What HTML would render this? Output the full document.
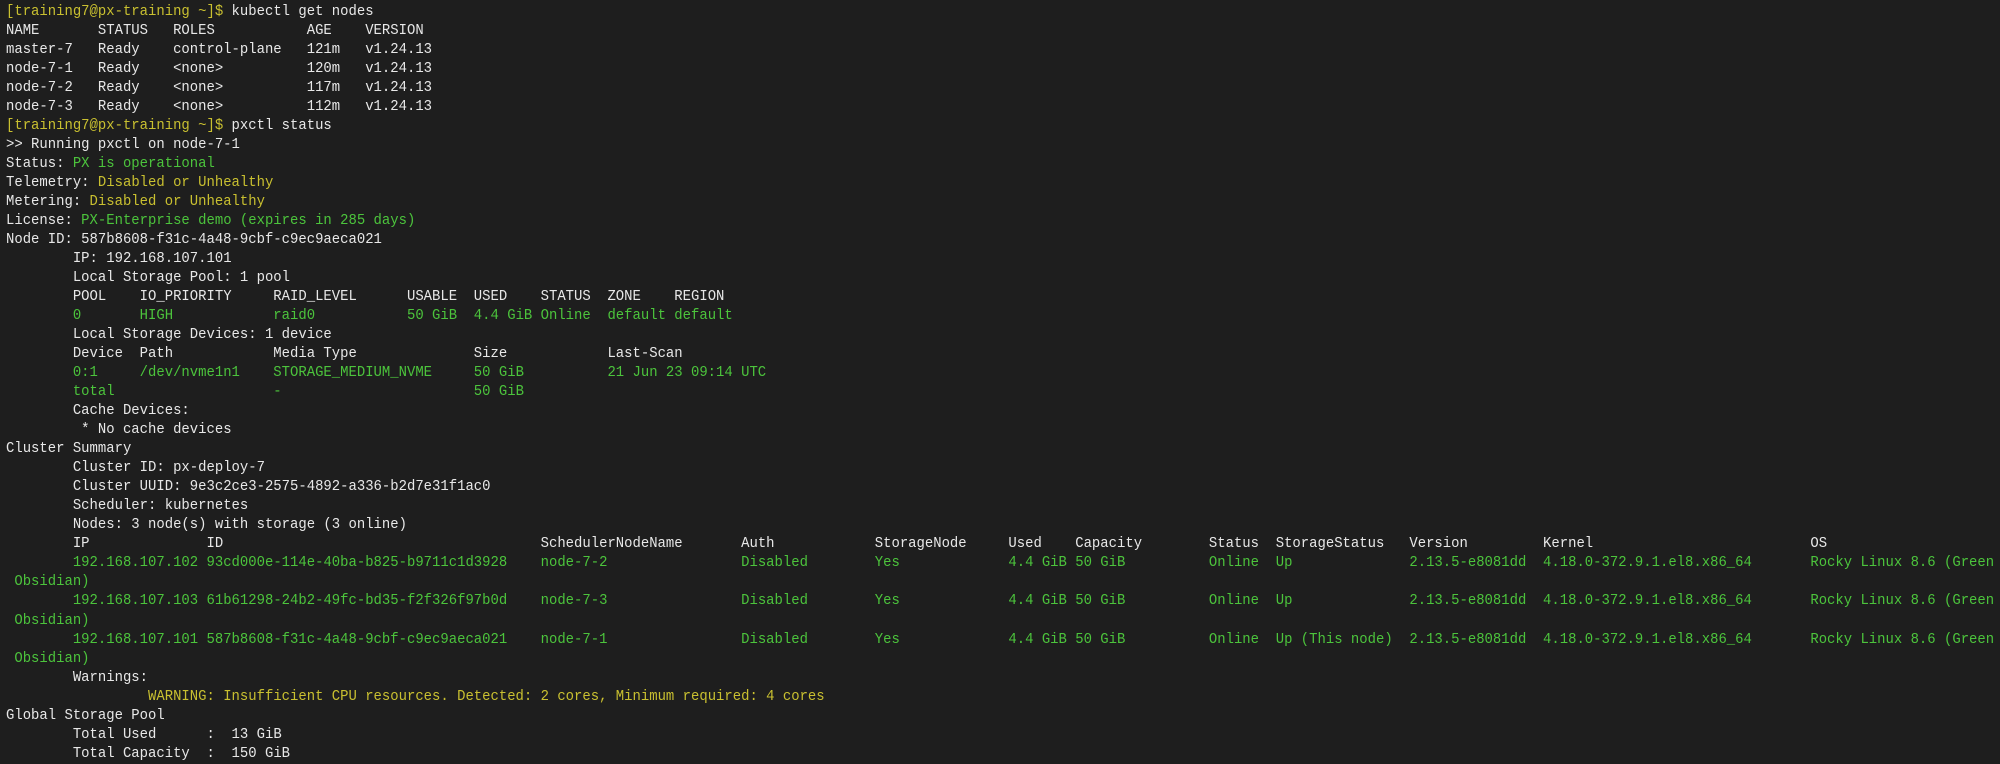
<!DOCTYPE html>
<html><head><meta charset="utf-8">
<style>
html,body{margin:0;padding:0;background:#1e1e1e;width:2000px;height:764px;overflow:hidden}
pre{margin:0;position:absolute;left:6px;top:2px;font-family:"Liberation Mono",monospace;font-size:15px;line-height:19.02px;color:#e8e8e8;transform:scaleX(0.928);transform-origin:0 0;tab-size:8;-moz-tab-size:8;white-space:pre}
.g{color:#4cc43c}.y{color:#c9c030}
</style></head><body>
<pre><span class="y">[training7@px-training ~]$</span> kubectl get nodes
NAME       STATUS   ROLES           AGE    VERSION
master-7   Ready    control-plane   121m   v1.24.13
node-7-1   Ready    &lt;none&gt;          120m   v1.24.13
node-7-2   Ready    &lt;none&gt;          117m   v1.24.13
node-7-3   Ready    &lt;none&gt;          112m   v1.24.13
<span class="y">[training7@px-training ~]$</span> pxctl status
&gt;&gt; Running pxctl on node-7-1
Status: <span class="g">PX is operational</span>
Telemetry: <span class="y">Disabled or Unhealthy</span>
Metering: <span class="y">Disabled or Unhealthy</span>
License: <span class="g">PX-Enterprise demo (expires in 285 days)</span>
Node ID: 587b8608-f31c-4a48-9cbf-c9ec9aeca021
	IP: 192.168.107.101
	Local Storage Pool: 1 pool
	POOL	IO_PRIORITY	RAID_LEVEL	USABLE	USED	STATUS	ZONE	REGION
<span class="g">	0	HIGH		raid0		50 GiB	4.4 GiB	Online	default	default</span>
	Local Storage Devices: 1 device
	Device	Path		Media Type		Size		Last-Scan
<span class="g">	0:1	/dev/nvme1n1	STORAGE_MEDIUM_NVME	50 GiB		21 Jun 23 09:14 UTC</span>
<span class="g">	total			-			50 GiB</span>
	Cache Devices:
	 * No cache devices
Cluster Summary
	Cluster ID: px-deploy-7
	Cluster UUID: 9e3c2ce3-2575-4892-a336-b2d7e31f1ac0
	Scheduler: kubernetes
	Nodes: 3 node(s) with storage (3 online)
	IP		ID					SchedulerNodeName	Auth		StorageNode	Used	Capacity	Status	StorageStatus	Version		Kernel				OS
<span class="g">	192.168.107.102	93cd000e-114e-40ba-b825-b9711c1d3928	node-7-2		Disabled	Yes		4.4 GiB	50 GiB		Online	Up		2.13.5-e8081dd	4.18.0-372.9.1.el8.x86_64	Rocky Linux 8.6 (Green</span>
<span class="g"> Obsidian)</span>
<span class="g">	192.168.107.103	61b61298-24b2-49fc-bd35-f2f326f97b0d	node-7-3		Disabled	Yes		4.4 GiB	50 GiB		Online	Up		2.13.5-e8081dd	4.18.0-372.9.1.el8.x86_64	Rocky Linux 8.6 (Green</span>
<span class="g"> Obsidian)</span>
<span class="g">	192.168.107.101	587b8608-f31c-4a48-9cbf-c9ec9aeca021	node-7-1		Disabled	Yes		4.4 GiB	50 GiB		Online	Up (This node)	2.13.5-e8081dd	4.18.0-372.9.1.el8.x86_64	Rocky Linux 8.6 (Green</span>
<span class="g"> Obsidian)</span>
	Warnings:
<span class="y">		 WARNING: Insufficient CPU resources. Detected: 2 cores, Minimum required: 4 cores</span>
Global Storage Pool
	Total Used    	:  13 GiB
	Total Capacity	:  150 GiB
</pre>
</body></html>
